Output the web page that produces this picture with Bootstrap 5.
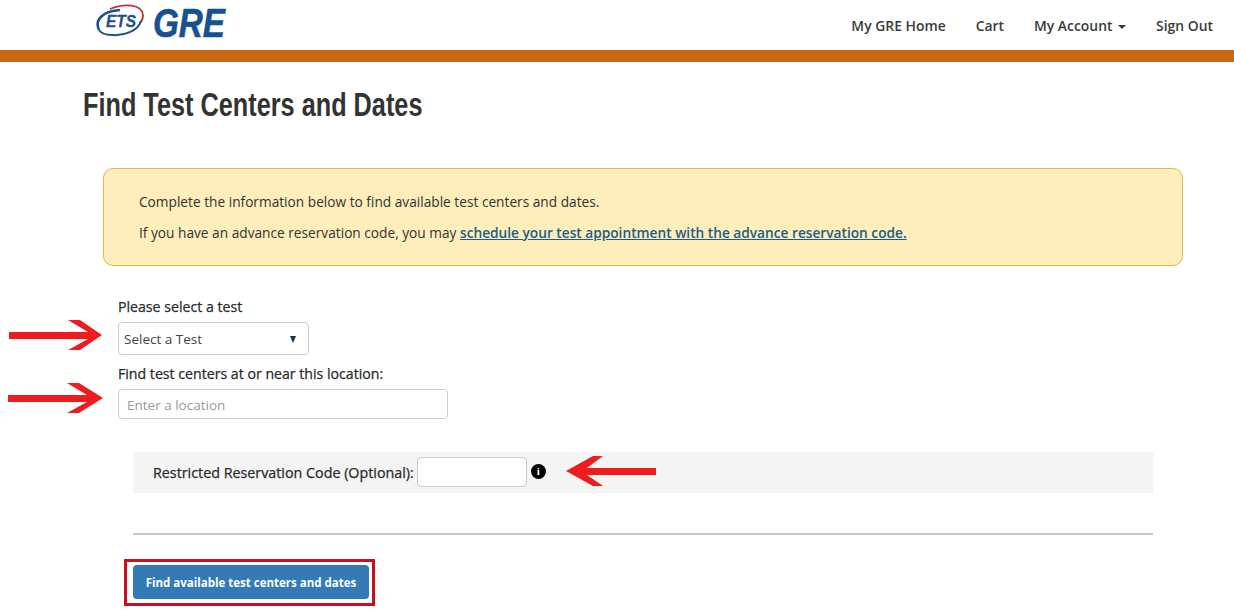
<!DOCTYPE html>
<html lang="en">

<head>
    <meta charset="UTF-8">
    <meta name="viewport" content="width=device-width, initial-scale=1.0">
    <title>Find Test Centers and Dates</title>
    <link href="https://cdn.jsdelivr.net/npm/bootstrap@5.3.3/dist/css/bootstrap.min.css" rel="stylesheet">
    <style>
        body {
            font-family: "Open Sans", "Noto Sans", sans-serif;
            font-size: 13.7px;
            color: #333;
            background: #fff;
            overflow: hidden;
        }

        .site-head {
            height: 50px;
            padding-left: 96px;
            padding-right: 21px;
        }

        .logo-wrap {
            width: 150px;
            height: 50px;
        }

        .logo-wrap svg {
            display: block;
        }

        .logo-wrap text {
            font-family: "Liberation Sans", sans-serif;
            font-style: italic;
            font-weight: 700;
        }

        .head-links {
            gap: 30px;
            padding-top: 2px;
        }

        .head-links a {
            color: #3a3a3a;
            text-decoration: none;
            font-weight: 600;
            font-size: 13.9px;
        }

        .caret-down {
            display: inline-block;
            margin-left: 2px;
            vertical-align: middle;
            border-top: 4px solid #3a3a3a;
            border-left: 4px solid transparent;
            border-right: 4px solid transparent;
        }

        .orange-bar {
            height: 12px;
            background: #ca6512;
        }

        .page-title {
            font-family: "Liberation Sans", sans-serif;
            font-size: 33px;
            font-weight: 700;
            color: #333;
            margin: 0 0 45px 83px;
            padding-top: 24px;
            line-height: 37px;
            white-space: nowrap;
            transform: scaleX(0.766);
            transform-origin: left center;
        }

        .note-box {
            margin: 0 51px 0 103px;
            height: 98px;
            padding: 23px 35px 0;
            background: #fdeebb;
            border: 1px solid #e6b63f;
            border-radius: 10px;
            color: #333;
        }

        .note-box p {
            margin: 0 0 12px;
            line-height: 19px;
        }

        .note-box a {
            color: #1f5c85;
            font-weight: 600;
        }

        .form-area {
            padding: 32px 81px 0 118px;
        }

        .field-label {
            display: block;
            font-weight: 500;
            font-size: 14.15px;
            color: #2a2a2a;
            -webkit-text-stroke: 0.25px #2a2a2a;
            line-height: 18px;
            margin-bottom: 6px;
        }

        .test-select {
            width: 191px;
            height: 33px;
            border: 1px solid #ccc;
            border-radius: 4px;
            padding: 1px 5px 0;
            font-size: 13.5px;
            color: #444;
            margin-bottom: 10px;
        }

        .select-tri {
            margin-right: 7px;
            border-top: 7px solid #12344d;
            border-left: 3.5px solid transparent;
            border-right: 3.5px solid transparent;
        }

        .loc-input {
            width: 330px;
            height: 30px;
            border: 1px solid #ccc;
            border-radius: 4px;
            padding: 1px 8px 0;
            font-size: 13.5px;
            color: #444;
        }

        .loc-input::placeholder {
            color: #999;
            opacity: 1;
        }

        .code-band {
            margin: 33px 0 0 15px;
            height: 41px;
            padding: 1px 0 0 20px;
            background: #f4f4f4;
            font-weight: 500;
            font-size: 14.3px;
            color: #2a2a2a;
            -webkit-text-stroke: 0.25px #2a2a2a;
        }

        .code-band input {
            width: 110px;
            height: 30px;
            margin-left: 3px;
            margin-top: -3px;
            border: 1px solid #ccc;
            border-radius: 4px;
        }

        .info-dot {
            width: 15px;
            height: 15px;
            margin: -4px 0 0 4px;
            border-radius: 50%;
            background: #000;
            color: #fff;
            -webkit-text-stroke: 0;
            font: 700 11px/15px "Liberation Serif", serif;
            text-align: center;
        }

        .divider-line {
            margin: 40px 0 0 15px;
            border: 0;
            border-top: 2px solid #c8c8c8;
            opacity: 1;
        }

        .submit-frame {
            display: inline-block;
            margin: 24px 0 0 6px;
            padding: 3px 3px 4px 6px;
            border: 3px solid #c8101a;
            line-height: 0;
        }

        .find-btn {
            width: 236px;
            height: 34px;
            padding: 1px 0 0;
            background: #337ab7;
            border: 0;
            border-radius: 4px;
            color: #fff;
            font-size: 11.5px;
            font-weight: 700;
        }

        .red-arrow {
            position: absolute;
            width: 96px;
            height: 32px;
        }

        .arrow-one {
            left: 8px;
            top: 319px;
        }

        .arrow-two {
            left: 7px;
            top: 382px;
        }

        .arrow-three {
            left: 565px;
            top: 455px;
            width: 92px;
        }
    </style>
</head>

<body>
    <header class="site-head d-flex justify-content-between align-items-center">
        <div class="logo-wrap">
            <svg width="150" height="50" viewBox="0 0 150 50" role="img" aria-label="ETS GRE logo">
                <g transform="translate(0 4)">
                    <path d="M3 26C-2 15 8 7 24 6" fill="none" stroke="#1d4f8a" stroke-width="2.6" />
                    <path d="M14 5C28 -1 46 0 47 11C47 14 46 17 44 19" fill="none" stroke="#b33a44" stroke-width="1.8" />
                    <path d="M45 17C42 27 28 32 16 31C10 31 5 29 3 26" fill="none" stroke="#1d4f8a" stroke-width="2" />
                    <text x="10" y="23" font-size="16" fill="#1d4f8a" stroke="#1d4f8a" stroke-width="0.3" textLength="30" lengthAdjust="spacingAndGlyphs">ETS</text>
                    <text x="57" y="33" font-size="40" fill="#17518f" stroke="#17518f" stroke-width="0.6" textLength="72" lengthAdjust="spacingAndGlyphs">GRE</text>
                </g>
            </svg>
        </div>
        <nav class="head-links d-flex align-items-center">
            <a href="#">My GRE Home</a>
            <a href="#">Cart</a>
            <a href="#">My Account <span class="caret-down"></span></a>
            <a href="#">Sign Out</a>
        </nav>
    </header>
    <div class="orange-bar"></div>

    <h1 class="page-title">Find Test Centers and Dates</h1>

    <div class="note-box">
        <p>Complete the information below to find available test centers and dates.</p>
        <p>If you have an advance reservation code, you may <a href="#">schedule your test appointment with the advance reservation code.</a></p>
    </div>

    <form class="form-area">
        <label class="field-label">Please select a test</label>
        <div class="test-select d-flex justify-content-between align-items-center">
            <span>Select a Test</span>
            <span class="caret-down select-tri"></span>
        </div>
        <label class="field-label">Find test centers at or near this location:</label>
        <input class="loc-input d-block" type="text" placeholder="Enter a location">

        <div class="code-band d-flex align-items-center">
            <span>Restricted Reservation Code (Optional):</span>
            <input type="text" aria-label="Restricted Reservation Code">
            <span class="info-dot">i</span>
        </div>

        <hr class="divider-line">

        <div class="submit-frame">
            <button type="button" class="btn find-btn">Find available test centers and dates</button>
        </div>
    </form>

    <svg class="red-arrow arrow-one" viewBox="0 0 96 32"><path d="M1 13H80L60 1H72L94 16L72 31H60L80 20H1Z" fill="#ee1c1c" /></svg>
    <svg class="red-arrow arrow-two" viewBox="0 0 96 32"><path d="M1 13H80L60 1H72L96 16L72 31H60L80 20H1Z" fill="#ee1c1c" /></svg>
    <svg class="red-arrow arrow-three" viewBox="0 0 92 32"><path d="M91 13H22L38 1H28L1 16L28 31H38L22 20H91Z" fill="#ee1c1c" /></svg>
</body>

</html>
